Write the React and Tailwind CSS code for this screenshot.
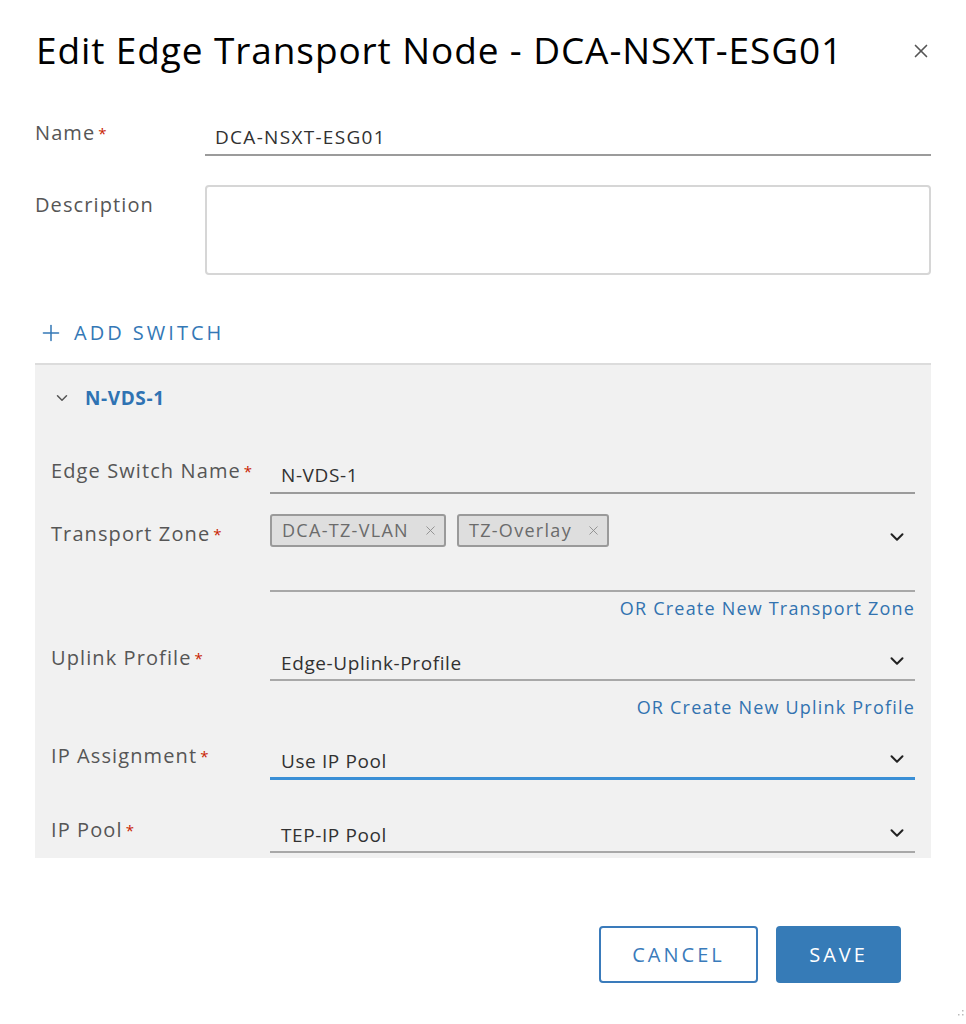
import { X, ChevronDown, Plus } from "lucide-react";

const Req = () => <span className="ml-[3px] text-[#c92100] text-[15px] align-top">*</span>;

const Label = ({ children, required = true, className = "" }) => (
  <div className={"text-[20px] leading-[30px] tracking-[1.1px] text-[#565656] " + className}>
    {children}
    {required && <Req />}
  </div>
);

const Select = ({ value, active }) => (
  <div>
    <div className="flex items-center justify-between h-[36px] pl-[11px] pr-[7px] text-[19px] tracking-[0.6px] text-[#313131]">
      <span className="pt-[4px]">{value}</span>
      <ChevronDown size={22} strokeWidth={2.2} className="text-[#222]" />
    </div>
    <div className={active ? "h-[3px] bg-[#3a8fd6]" : "h-[2px] bg-[#a8a8a8]"} />
  </div>
);

const Tag = ({ label }) => (
  <div className="flex items-center gap-[14px] h-[33px] pl-[10px] pr-[6px] border-2 border-[#9a9a9a] rounded-[3px] bg-[#dedede] text-[18px] tracking-[1.3px] text-[#6b6b6b]">
    {label}
    <X size={15} strokeWidth={1.4} className="text-[#8a8a8a]" />
  </div>
);

export default function App() {
  return (
    <div className="min-h-[1024px] bg-white font-['Open_Sans',sans-serif] relative">
      <div className="flex items-start justify-between pl-[36px] pr-[34px] pt-[26px]">
        <h1 className="text-[37px] text-black leading-[48px] tracking-[0.9px]">
          Edit Edge Transport Node - DCA-NSXT-ESG01
        </h1>
        <X size={22} strokeWidth={1.8} className="mt-[14px] text-[#555]" />
      </div>

      <div className="mt-[44px] pl-[35px] pr-[35px]">
        <div className="flex items-start">
          <Label className="w-[170px]">Name</Label>
          <div className="flex-1">
            <div className="h-[36px] pl-[10px] pt-[2px] text-[19px] tracking-[1.3px] text-[#313131] leading-[34px]">DCA-NSXT-ESG01</div>
            <div className="h-[2px] bg-[#9b9b9b]" />
          </div>
        </div>

        <div className="flex items-start mt-[29px]">
          <Label required={false} className="w-[170px] pt-[5px]">Description</Label>
          <div className="flex-1 h-[90px] border-2 border-[#d6d6d6] rounded-[4px]" />
        </div>

        <div className="flex items-center gap-[10px] mt-[43px] pl-[3px] text-[#3478b6] text-[20px] leading-[30px] tracking-[3px]">
          <Plus size={26} strokeWidth={1.4} />
          <span>ADD SWITCH</span>
        </div>

        <div className="mt-[15px] border-t-2 border-[#dcdcdc] bg-[#f1f1f1] pl-[16px] pr-[16px] pb-[5px]">
          <div className="flex items-center gap-[14px] pt-[19px] pl-[2px]">
            <ChevronDown size={18} strokeWidth={2} className="text-[#555]" />
            <span className="text-[#2f73b3] text-[19px] leading-[28px] tracking-[0.6px] font-bold">N-VDS-1</span>
          </div>

          <div className="flex items-start mt-[44px]">
            <Label className="w-[219px]">Edge Switch Name</Label>
            <div className="flex-1">
              <div className="h-[36px] pl-[11px] pt-[2px] text-[19px] tracking-[0.6px] text-[#313131] leading-[34px]">N-VDS-1</div>
              <div className="h-[2px] bg-[#9b9b9b]" />
            </div>
          </div>

          <div className="flex items-start mt-[20px]">
            <Label className="w-[219px] pt-[5px]">Transport Zone</Label>
            <div className="flex-1">
              <div className="flex items-start justify-between h-[76px]">
                <div className="flex gap-[11px]">
                  <Tag label="DCA-TZ-VLAN" />
                  <Tag label="TZ-Overlay" />
                </div>
                <ChevronDown size={22} strokeWidth={2.2} className="mt-[12px] mr-[7px] text-[#222]" />
              </div>
              <div className="h-[2px] bg-[#a8a8a8]" />
              <div className="text-right text-[18px] leading-[27px] tracking-[1.2px] text-[#3273b0] mt-[3px]">OR Create New Transport Zone</div>
            </div>
          </div>

          <div className="flex items-start mt-[21px]">
            <Label className="w-[219px]">Uplink Profile</Label>
            <div className="flex-1">
              <Select value="Edge-Uplink-Profile" />
              <div className="text-right text-[18px] leading-[27px] tracking-[1.2px] text-[#3273b0] mt-[13px]">OR Create New Uplink Profile</div>
            </div>
          </div>

          <div className="flex items-start mt-[20px]">
            <Label className="w-[219px]">IP Assignment</Label>
            <div className="flex-1">
              <Select value="Use IP Pool" active />
            </div>
          </div>

          <div className="flex items-start mt-[35px]">
            <Label className="w-[219px]">IP Pool</Label>
            <div className="flex-1">
              <Select value="TEP-IP Pool" />
            </div>
          </div>
        </div>

        <div className="flex justify-end gap-[18px] mt-[68px] pr-[30px]">
          <button className="w-[159px] h-[57px] border-2 border-[#3a7bbb] rounded-[4px] text-[#3a7bbb] text-[20px] font-medium tracking-[3px] bg-white">
            CANCEL
          </button>
          <button className="w-[125px] h-[57px] rounded-[4px] bg-[#367bb7] text-white text-[20px] font-medium tracking-[3px]">
            SAVE
          </button>
        </div>
      </div>

      <svg className="absolute right-[2px] bottom-[6px]" width="8" height="8" viewBox="0 0 8 8">
        <rect x="6" y="0" width="1.5" height="1.5" fill="#bbb" />
        <rect x="6" y="4" width="1.5" height="1.5" fill="#bbb" />
        <rect x="2" y="4" width="1.5" height="1.5" fill="#bbb" />
      </svg>
    </div>
  );
}
